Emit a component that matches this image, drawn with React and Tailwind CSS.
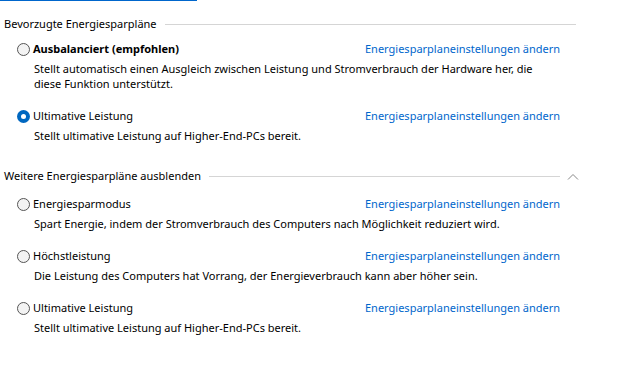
const LINK = "Energiesparplaneinstellungen ändern";

const preferred = [
  {
    name: "Ausbalanciert (empfohlen)",
    bold: true,
    desc: "Stellt automatisch einen Ausgleich zwischen Leistung und Stromverbrauch der Hardware her, die diese Funktion unterstützt.",
  },
  {
    name: "Ultimative Leistung",
    checked: true,
    desc: "Stellt ultimative Leistung auf Higher-End-PCs bereit.",
  },
];

const more = [
  {
    name: "Energiesparmodus",
    desc: "Spart Energie, indem der Stromverbrauch des Computers nach Möglichkeit reduziert wird.",
  },
  {
    name: "Höchstleistung",
    desc: "Die Leistung des Computers hat Vorrang, der Energieverbrauch kann aber höher sein.",
  },
  {
    name: "Ultimative Leistung",
    desc: "Stellt ultimative Leistung auf Higher-End-PCs bereit.",
  },
];

function Radio({ checked }) {
  if (checked) {
    return (
      <span className="w-[13px] h-[13px] rounded-full bg-[#0067c0] flex items-center justify-center flex-shrink-0">
        <span className="w-[5px] h-[5px] rounded-full bg-white" />
      </span>
    );
  }
  return (
    <span className="w-[13px] h-[13px] rounded-full border border-[#555] bg-[#f3f3f3] flex-shrink-0" />
  );
}

function Plan({ plan }) {
  return (
    <div className="pl-[13px] mb-[16px]">
      <div className="flex items-center h-[19px]">
        <div className="w-[348px] flex items-center gap-[3px]">
          <Radio checked={plan.checked} />
          <span className={plan.bold ? "font-bold" : ""}>{plan.name}</span>
        </div>
        <a className="text-[#0066cc]">{LINK}</a>
      </div>
      <p className="mt-[2px] pl-[17px] w-[530px] leading-[15px]">{plan.desc}</p>
    </div>
  );
}

export default function App() {
  return (
    <div
      className="w-[617px] h-[391px] bg-white overflow-hidden text-[11px] text-black"
      style={{ fontFamily: '"Segoe UI", "Noto Sans", sans-serif' }}
    >
      {/* cut-off link underline from above */}
      <div className="h-[1px] w-[197px] bg-[#0066cc]" />

      <div className="pl-[4px]">
        <div className="flex items-center w-[572px] h-[15px] mt-[16px]">
          <span>Bevorzugte Energiesparpläne</span>
          <span className="flex-1 h-px bg-[#d5d5d5] ml-[8px]" />
        </div>
        <div className="mt-[8px]">
          {preferred.map((p, i) => (
            <Plan key={i} plan={p} />
          ))}
        </div>

        <div className="flex items-center w-[575px] h-[15px] mt-[26px]">
          <span>Weitere Energiesparpläne ausblenden</span>
          <span className="flex-1 h-px bg-[#d5d5d5] ml-[8px]" />
          <svg width="12" height="8" viewBox="0 0 12 8" className="ml-[7px]">
            <path d="M1 6.5 L6 1.5 L11 6.5" fill="none" stroke="#888" strokeWidth="1" />
          </svg>
        </div>
        <div className="mt-[11px]">
          {more.map((p, i) => (
            <Plan key={i} plan={p} />
          ))}
        </div>
      </div>
    </div>
  );
}
